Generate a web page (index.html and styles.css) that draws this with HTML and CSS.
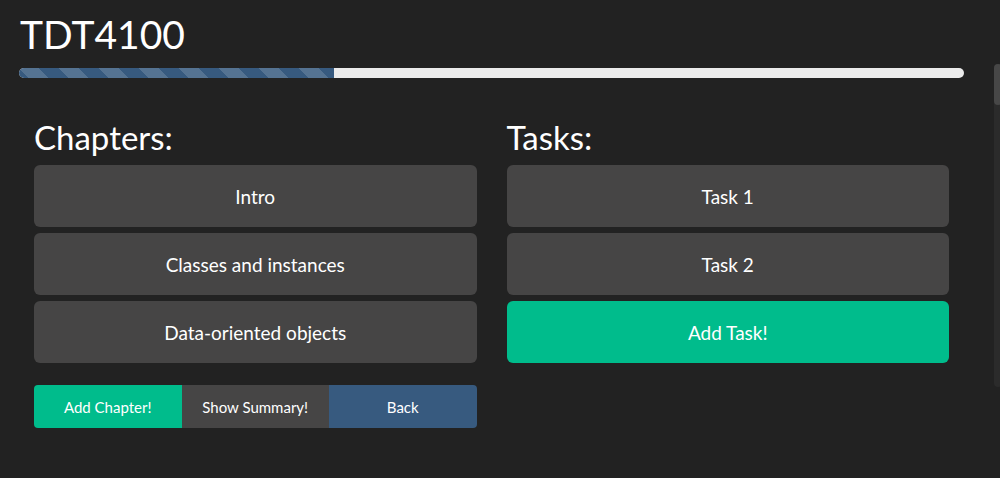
FILE: index.html
```html
<!DOCTYPE html>
<html>
<head>
<meta charset="utf-8">
<link rel="stylesheet" href="styles.css">
</head>
<body>
<div class="page">
  <h1 class="title">TDT4100</h1>
  <div class="progress"><div class="progress-bar" style="width: 33.3%"></div></div>
  <div class="row">
    <div class="col">
      <h2 class="heading">Chapters:</h2>
      <div class="list">
        <button class="btn btn-big btn-default">Intro</button>
        <button class="btn btn-big btn-default">Classes and instances</button>
        <button class="btn btn-big btn-default">Data-oriented objects</button>
      </div>
      <div class="btn-group">
        <button class="btn btn-small btn-success">Add Chapter!</button>
        <button class="btn btn-small btn-default">Show Summary!</button>
        <button class="btn btn-small btn-primary">Back</button>
      </div>
    </div>
    <div class="col">
      <h2 class="heading">Tasks:</h2>
      <div class="list">
        <button class="btn btn-big btn-default">Task 1</button>
        <button class="btn btn-big btn-default">Task 2</button>
        <button class="btn btn-big btn-success">Add Task!</button>
      </div>
    </div>
  </div>
</div>
<div class="fake-scrollbar"><div class="fake-thumb"></div></div>
</body>
</html>
```
FILE: styles.css
```css
html, body {
  margin: 0;
  padding: 0;
  background: #222222;
  color: #ffffff;
  font-family: Lato, "Liberation Sans", sans-serif;
  height: 100%;
  overflow: hidden;
}
.page {
  width: 945px;
  margin-left: 19px;
  display: flex;
  flex-direction: column;
}
.title {
  font-size: 39px;
  font-weight: 400;
  line-height: 1.1;
  margin: 13px 0 0 1px;
}
.progress {
  margin-top: 12px;
  height: 10px;
  border-radius: 5px;
  background: #ebebeb;
  overflow: hidden;
}
.progress-bar {
  height: 100%;
  background-color: #375a7f;
  background-image: linear-gradient(45deg, rgba(255,255,255,.15) 25%, transparent 25%, transparent 50%, rgba(255,255,255,.15) 50%, rgba(255,255,255,.15) 75%, transparent 75%, transparent);
  background-size: 40px 40px;
}
.row {
  display: flex;
  margin-top: 41px;
}
.col {
  flex: 1;
  padding: 0 15px;
  display: flex;
  flex-direction: column;
}
.heading {
  font-size: 33px;
  font-weight: 400;
  line-height: 1.1;
  margin: 0 0 10px 0;
}
.list {
  display: flex;
  flex-direction: column;
  gap: 6px;
}
.btn {
  font-family: Lato, "Liberation Sans", sans-serif;
  color: #ffffff;
  border: none;
  margin: 0;
  padding: 0;
  cursor: pointer;
}
.btn-big {
  height: 62px;
  font-size: 19px;
  border-radius: 6px;
}
.btn-default { background: #464545; }
.btn-success { background: #00bc8c; }
.btn-primary { background: #375a7f; }
.btn-group {
  display: flex;
  margin-top: 22px;
}
.btn-small {
  flex: 1;
  height: 43px;
  font-size: 15px;
}
.btn-group .btn-small:first-child { border-radius: 4px 0 0 4px; }
.btn-group .btn-small:last-child { border-radius: 0 4px 4px 0; }
.fake-scrollbar {
  position: absolute;
  left: 994px;
  top: 64px;
  width: 8px;
  height: 323px;
  border-radius: 4px;
  background: #2b2b2b;
}
.fake-thumb {
  height: 41px;
  border-radius: 4px;
  background: #474747;
}
```
